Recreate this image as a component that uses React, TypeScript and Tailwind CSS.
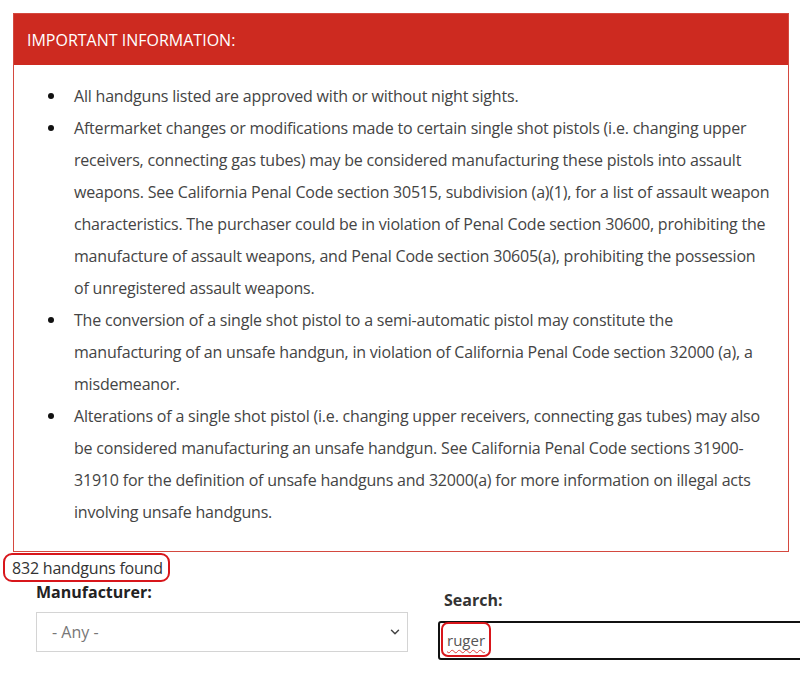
import { ChevronDown } from "lucide-react";

const ITEMS = [
  "All handguns listed are approved with or without night sights.",
  "Aftermarket changes or modifications made to certain single shot pistols (i.e. changing upper receivers, connecting gas tubes) may be considered manufacturing these pistols into assault weapons. See California Penal Code section 30515, subdivision (a)(1), for a list of assault weapon characteristics. The purchaser could be in violation of Penal Code section 30600, prohibiting the manufacture of assault weapons, and Penal Code section 30605(a), prohibiting the possession of unregistered assault weapons.",
  "The conversion of a single shot pistol to a semi-automatic pistol may constitute the manufacturing of an unsafe handgun, in violation of California Penal Code section 32000 (a), a misdemeanor.",
  "Alterations of a single shot pistol (i.e. changing upper receivers, connecting gas tubes) may also be considered manufacturing an unsafe handgun. See California Penal Code sections 31900-31910 for the definition of unsafe handguns and 32000(a) for more information on illegal acts involving unsafe handguns.",
];

export default function App() {
  return (
    <div className="min-h-[676px] w-[800px] overflow-hidden bg-white font-['Open_Sans',sans-serif] text-[16px] text-[#444]">
      {/* notice box */}
      <div className="ml-[13px] mt-[13px] w-[776px] border border-[#d4493f]">
        <div className="flex h-[51px] items-center bg-[#cd2a20] px-[13px] text-[16px] font-medium text-white">
          IMPORTANT INFORMATION:
        </div>
        <ul className="pb-[23px] pr-[17px] pt-[15px] tracking-[-0.2px]">
          {ITEMS.map((text) => (
            <li key={text} className="relative pl-[60px] leading-[32px]">
              <span className="absolute left-[34px] top-[13px] h-[6px] w-[6px] rounded-full bg-[#111]" />
              {text}
            </li>
          ))}
        </ul>
      </div>

      {/* result count */}
      <div className="relative ml-[12px] mt-[4px] leading-[24px] tracking-[-0.2px] text-[#333]">
        832 handguns found
        <span className="absolute -top-[3px] left-[-9px] h-[29px] w-[167px] rounded-[9px] border-[2.5px] border-[#d8161b]" />
      </div>

      {/* filters */}
      <div className="flex">
        <div className="ml-[36px] w-[372px] shrink-0">
          <div className="font-bold leading-[24px] text-[#222]">Manufacturer:</div>
          <div className="mt-[8px] flex h-[40px] items-center justify-between border border-[#d4d4d4] pl-[15px] pr-[5px] text-[#777]">
            <span>- Any -</span>
            <ChevronDown size={14} strokeWidth={2.5} className="text-[#444]" />
          </div>
        </div>
        <div className="ml-[30px] mt-[8px] w-[362px] shrink-0">
          <div className="pl-[6px] font-bold leading-[24px] text-[#333]">Search:</div>
          <div className="mt-[9px] flex h-[39px] w-[380px] items-center rounded-[3px] border-2 border-[#111] pl-[7px] text-[15px] text-[#555]">
            <span className="relative underline decoration-[#e03b3b] decoration-wavy decoration-1 underline-offset-[3px]">
              ruger
              <span className="absolute -bottom-[5px] -left-[6px] -right-[6px] -top-[7px] rounded-[7px] border-[2.5px] border-[#d8161b]" />
            </span>
          </div>
        </div>
      </div>
    </div>
  );
}
